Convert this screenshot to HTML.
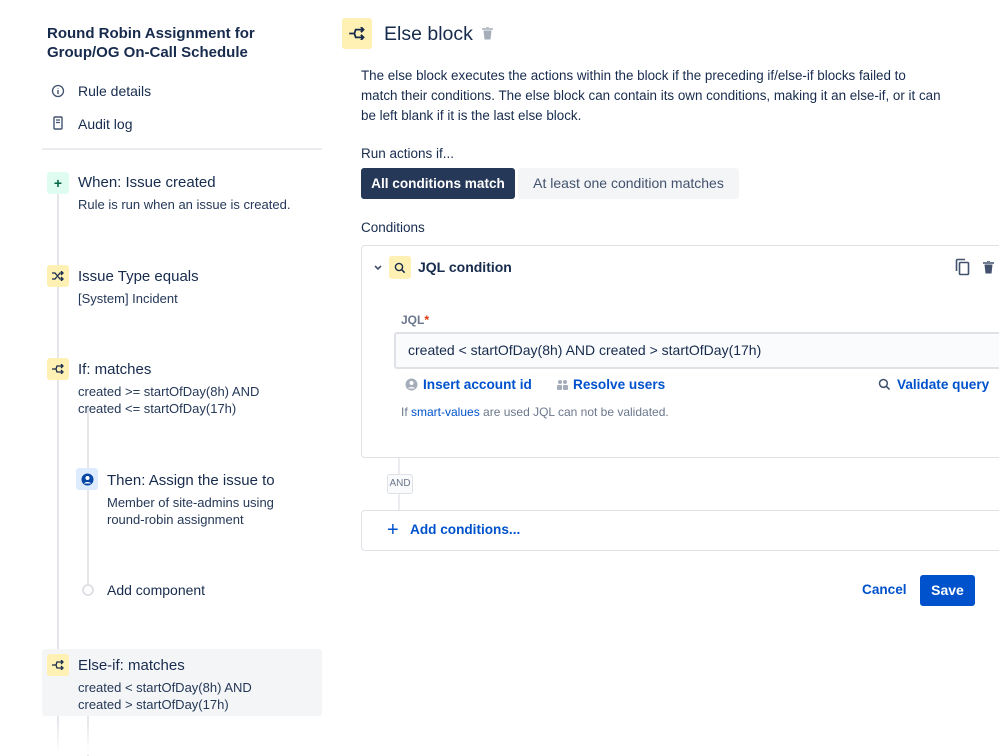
<!DOCTYPE html>
<html><head><meta charset="utf-8"><style>
*{box-sizing:border-box;margin:0;padding:0}
body{width:999px;height:755px;overflow:hidden;background:#fff;font-family:"Liberation Sans",sans-serif;color:#172b4d;position:relative}
.a{position:absolute;white-space:nowrap}
.t{font-size:15px;line-height:18px}
.s{font-size:13px;line-height:17px;color:#253858}
.ic{position:absolute;width:22px;height:22px;border-radius:3px;display:flex;align-items:center;justify-content:center}
.y{background:#fff0b3}
.lk{color:#0052cc;font-size:13.6px;font-weight:bold}
</style></head><body>
<div class="a" style="left:47px;top:24px;font-size:15px;font-weight:bold;line-height:19px">Round Robin Assignment for<br>Group/OG On-Call Schedule</div>
<svg class="a" style="left:51px;top:84px" width="14" height="14" viewBox="0 0 14 14"><circle cx="7" cy="7" r="5.5" fill="none" stroke="#42526e" stroke-width="1.3"/><path d="M7 6v4M7 4v.5" stroke="#42526e" stroke-width="1.4"/></svg>
<div class="a" style="left:78px;top:83px;font-size:14px">Rule details</div>
<svg class="a" style="left:53px;top:116px" width="10" height="14" viewBox="0 0 10 14"><rect x="1" y="1" width="8" height="12" rx="1" fill="none" stroke="#42526e" stroke-width="1.4"/><path d="M3 4h4M3 6.5h4" stroke="#42526e" stroke-width="1.2"/></svg>
<div class="a" style="left:78px;top:116px;font-size:14px">Audit log</div>
<div class="a" style="left:42px;top:148px;width:280px;height:2px;background:#ebecf0"></div>
<div class="a" style="left:57px;top:190px;width:2px;height:565px;background:#e4e6ea"></div>
<div class="a" style="left:87px;top:405px;width:2px;height:180px;background:#e4e6ea"></div>
<div class="a" style="left:87px;top:716px;width:2px;height:40px;background:#e4e6ea"></div>
<div class="a" style="left:42px;top:649px;width:280px;height:67px;background:#f4f5f7;border-radius:3px"></div>

<div class="ic" style="left:47px;top:172px;background:#dffcf0;color:#006644;font-weight:bold;font-size:14px">+</div>
<div class="a t" style="left:78px;top:174px">When: Issue created</div>
<div class="a s" style="left:78px;top:196px">Rule is run when an issue is created.</div>

<div class="ic y" style="left:47px;top:265px"><svg width="12" height="10" viewBox="0 0 12 10"><path d="M0 2h3l5 6h3M0 8h3l5-6h3M9 0l2 2-2 2M9 6l2 2-2 2" fill="none" stroke="#172b4d" stroke-width="1.3"/></svg></div>
<div class="a t" style="left:78px;top:268px">Issue Type equals</div>
<div class="a s" style="left:78px;top:290px">[System] Incident</div>

<div class="ic y" style="left:47px;top:358px"><svg width="12" height="10" viewBox="0 0 12 10"><path d="M0 5h4M4 5l1-3h5M4 5l1 3h5M9 0l2 2-2 2M9 6l2 2-2 2" fill="none" stroke="#172b4d" stroke-width="1.3"/></svg></div>
<div class="a t" style="left:78px;top:361px">If: matches</div>
<div class="a s" style="left:78px;top:383px">created &gt;= startOfDay(8h) AND<br>created &lt;= startOfDay(17h)</div>

<div class="ic" style="left:76px;top:468px;background:#deebff"><svg width="13" height="13" viewBox="0 0 13 13"><circle cx="6.5" cy="6.5" r="6" fill="#0747a6"/><circle cx="6.5" cy="5" r="2" fill="#fff"/><path d="M3 10.5c1-2 6-2 7 0" fill="#fff"/></svg></div>
<div class="a t" style="left:107px;top:472px">Then: Assign the issue to</div>
<div class="a s" style="left:107px;top:494px">Member of site-admins using<br>round-robin assignment</div>

<div class="a" style="left:82px;top:584px;width:12px;height:12px;border-radius:50%;border:2px solid #dfe1e6;background:#fff"></div>
<div class="a" style="left:107px;top:582px;font-size:14px;color:#172b4d">Add component</div>

<div class="ic y" style="left:47px;top:654px"><svg width="12" height="10" viewBox="0 0 12 10"><path d="M0 5h4M4 5l1-3h5M4 5l1 3h5M9 0l2 2-2 2M9 6l2 2-2 2" fill="none" stroke="#172b4d" stroke-width="1.3"/></svg></div>
<div class="a t" style="left:78px;top:657px">Else-if: matches</div>
<div class="a s" style="left:78px;top:679px">created &lt; startOfDay(8h) AND<br>created &gt; startOfDay(17h)</div>

<!-- right -->
<div class="ic y" style="left:342px;top:18px;width:30px;height:31px"><svg width="16" height="13" viewBox="0 0 12 10"><path d="M0 5h4M4 5l1-3h5M4 5l1 3h5M9 0l2 2-2 2M9 6l2 2-2 2" fill="none" stroke="#172b4d" stroke-width="1.4"/></svg></div>
<div class="a" style="left:384px;top:22px;font-size:19.5px;line-height:24px">Else block</div>
<svg class="a" style="left:482px;top:27px" width="11" height="13" viewBox="0 0 11 13"><path d="M0 2h11M4 0h3" stroke="#a5adba" stroke-width="1.5"/><path d="M1.5 3.5h8l-1 9h-6z" fill="#a5adba"/></svg>
<div class="a" style="left:361px;top:66px;font-size:13.4px;line-height:20px">The else block executes the actions within the block if the preceding if/else-if blocks failed to<br>match their conditions. The else block can contain its own conditions, making it an else-if, or it can<br>be left blank if it is the last else block.</div>
<div class="a" style="left:361px;top:146px;font-size:13.5px">Run actions if...</div>
<div class="a" style="left:361px;top:168px;width:154px;height:31px;background:#253858;border-radius:3px;color:#fff;font-weight:bold;font-size:13.6px;text-align:center;line-height:31px">All conditions match</div>
<div class="a" style="left:518px;top:168px;width:221px;height:31px;background:#f4f5f7;border-radius:3px;color:#42526e;font-size:14px;text-align:center;line-height:31px">At least one condition matches</div>
<div class="a" style="left:361px;top:220px;font-size:13.5px">Conditions</div>

<div class="a" style="left:361px;top:245px;width:660px;height:213px;border:1px solid #dfe1e6;border-radius:4px"></div>
<svg class="a" style="left:374px;top:265px" width="8" height="6" viewBox="0 0 8 6"><path d="M1 1l3 3 3-3" fill="none" stroke="#42526e" stroke-width="1.6"/></svg>
<div class="ic y" style="left:389px;top:256px;height:23px"><svg width="12" height="12" viewBox="0 0 12 12"><circle cx="5" cy="5" r="3.6" fill="none" stroke="#172b4d" stroke-width="1.4"/><path d="M7.7 7.7l3 3" stroke="#172b4d" stroke-width="1.5"/></svg></div>
<div class="a" style="left:418px;top:259px;font-size:14px;font-weight:bold">JQL condition</div>
<svg class="a" style="left:955px;top:258px" width="15" height="18" viewBox="0 0 15 18"><path d="M1.5 13V2.5A1 1 0 0 1 2.5 1.5H10" fill="none" stroke="#42526e" stroke-width="1.6"/><rect x="4.5" y="4.5" width="9" height="12" rx="1" fill="none" stroke="#42526e" stroke-width="1.6"/></svg>
<svg class="a" style="left:983px;top:261px" width="11" height="13" viewBox="0 0 11 13"><path d="M0 2h11M4 0h3" stroke="#42526e" stroke-width="1.5"/><path d="M1.5 3.5h8l-1 9h-6z" fill="#42526e"/></svg>
<div class="a" style="left:401px;top:313px;font-size:12px;font-weight:bold;color:#6b778c">JQL<span style="color:#de350b">*</span></div>
<div class="a" style="left:394px;top:332px;width:620px;height:37px;background:#fafbfc;border:2px solid #dfe1e6;border-radius:3px"></div>
<div class="a" style="left:408px;top:342px;font-size:14px">created &lt; startOfDay(8h) AND created &gt; startOfDay(17h)</div>
<svg class="a" style="left:405px;top:378px" width="13" height="13" viewBox="0 0 13 13"><circle cx="6.5" cy="6.5" r="6" fill="#a5adba"/><circle cx="6.5" cy="5" r="2" fill="#fff"/><path d="M3 10.5c1-2 6-2 7 0" fill="#fff"/></svg>
<div class="a lk" style="left:423px;top:377px">Insert account id</div>
<svg class="a" style="left:556px;top:379px" width="13" height="11" viewBox="0 0 13 11"><circle cx="4" cy="3" r="2" fill="#a5adba"/><circle cx="9" cy="3" r="2" fill="#a5adba"/><rect x="1" y="6" width="5" height="5" rx="1" fill="#a5adba"/><rect x="7" y="6" width="5" height="5" rx="1" fill="#a5adba"/></svg>
<div class="a lk" style="left:573px;top:377px">Resolve users</div>
<svg class="a" style="left:878px;top:378px" width="13" height="13" viewBox="0 0 12 12"><circle cx="5" cy="5" r="3.6" fill="none" stroke="#42526e" stroke-width="1.4"/><path d="M7.7 7.7l3 3" stroke="#42526e" stroke-width="1.5"/></svg>
<div class="a lk" style="left:897px;top:377px">Validate query</div>
<div class="a" style="left:401px;top:405px;font-size:12px;color:#6b778c">If <span style="color:#0052cc">smart-values</span> are used JQL can not be validated.</div>

<div class="a" style="left:398px;top:458px;width:2px;height:52px;background:#ebecf0"></div>
<div class="a" style="left:387px;top:474px;width:26px;height:20px;background:#fafbfc;border:1px solid #dfe1e6;border-radius:3px;font-size:10px;color:#6b778c;text-align:center;line-height:18px">AND</div>

<div class="a" style="left:361px;top:510px;width:660px;height:41px;border:1px solid #dfe1e6;border-radius:4px"></div>
<div class="a" style="left:387px;top:518px;font-size:20px;color:#0052cc;line-height:24px">+</div>
<div class="a lk" style="left:410px;top:522px">Add conditions...</div>

<div class="a lk" style="left:862px;top:582px">Cancel</div>
<div class="a" style="left:920px;top:575px;width:55px;height:31px;background:#0052cc;border-radius:3px;color:#fff;font-weight:bold;font-size:14px;text-align:center;line-height:31px">Save</div>

<div class="a" style="left:0;top:720px;width:999px;height:35px;background:linear-gradient(rgba(255,255,255,0),#fff 90%)"></div>
</body></html>
